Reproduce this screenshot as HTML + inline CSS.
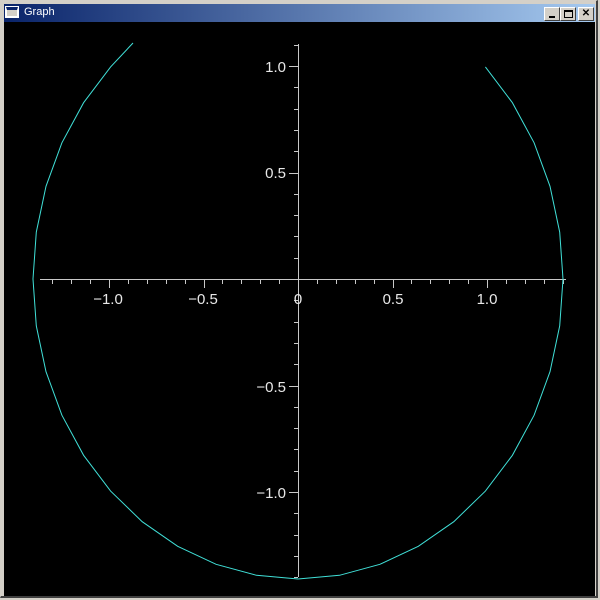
<!DOCTYPE html>
<html><head><meta charset="utf-8"><style>
html,body{margin:0;padding:0;width:600px;height:600px;overflow:hidden;background:#d4d0c8}
#win{position:absolute;left:0;top:0;width:598px;height:598px;border-top:1px solid #d4d0c8;border-left:1px solid #d4d0c8;border-right:2px solid #404040;border-bottom:2px solid #404040;box-sizing:border-box}
#tb{position:absolute;left:4px;top:4px;width:591px;height:18px;background:linear-gradient(to right,#0a246a,#a6caf0)}
#tt{position:absolute;left:20px;top:2px;color:#fff;font:11px "Liberation Sans",sans-serif}
#ic{position:absolute;left:2px;top:3px;width:12px;height:10px;background:#d4d0c8;border:1px solid #fff;border-top:3px solid #0a246a;box-sizing:border-box;outline:1px solid #fff}
.b{position:absolute;top:3px;width:16px;height:14px;background:#d4d0c8;border-top:1px solid #fff;border-left:1px solid #fff;border-right:1px solid #404040;border-bottom:1px solid #404040;box-sizing:border-box;font:bold 10px "Liberation Sans",sans-serif;text-align:center;line-height:12px;color:#000}
svg{position:absolute;left:0;top:0}
</style></head><body>
<div id="win"></div>
<div id="tb"><div id="ic"></div><div id="tt">Graph</div>
<div class="b" style="left:540px"><div style="position:absolute;left:4px;top:8px;width:6px;height:2px;background:#000"></div></div>
<div class="b" style="left:556px"><div style="position:absolute;left:3px;top:2px;width:9px;height:8px;border:1px solid #000;border-top:2px solid #000;box-sizing:border-box"></div></div>
<div class="b" style="left:574px">✕</div>
</div>
<svg width="600" height="600" id="s">
<rect x="4" y="22" width="591" height="574" fill="#000"/>
<g id="ax" stroke="#c8c8c8" stroke-width="1" shape-rendering="crispEdges">
<line x1="40" y1="279.5" x2="566" y2="279.5"/>
<line x1="298.5" y1="44" x2="298.5" y2="577"/>
</g>
<g fill="#e8e8e8" font-family="Liberation Sans, sans-serif" font-size="15">
<text x="108" y="304" text-anchor="middle">−1.0</text>
<text x="203" y="304" text-anchor="middle">−0.5</text>
<text x="298" y="304" text-anchor="middle">0</text>
<text x="393" y="304" text-anchor="middle">0.5</text>
<text x="487" y="304" text-anchor="middle">1.0</text>
<text x="286" y="72" text-anchor="end">1.0</text>
<text x="286" y="178" text-anchor="end">0.5</text>
<text x="286" y="392" text-anchor="end">−0.5</text>
<text x="286" y="498" text-anchor="end">−1.0</text>
</g>
<polyline id="c" fill="none" stroke="#40e0d8" stroke-width="1"/>
</svg>
<script>
var ax=document.getElementById('ax'),ns='http://www.w3.org/2000/svg';
function L(a,b,c,d){var l=document.createElementNS(ns,'line');l.setAttribute('x1',a);l.setAttribute('y1',b);l.setAttribute('x2',c);l.setAttribute('y2',d);ax.appendChild(l);}
for(var k=-13;k<=14;k++){if(k==0)continue;var x=Math.round(298+18.9*k)+0.5;L(x,279,x,k%5==0?288:284);}
for(var k=-14;k<=11;k++){if(k==0)continue;var y=Math.round(279-21.3*k)+0.5;L(k%5==0?289:294,y,298,y);}
var p=[];for(var i=0;i<=40;i++){var a=(45-9*i)*Math.PI/180;var x=298+265*Math.cos(a),y=279-300*Math.sin(a);if(y<43){break;}p.push(x.toFixed(1)+','+y.toFixed(1));}
p.push('133,43');
document.getElementById('c').setAttribute('points',p.join(' '));
</script>
</body></html>
